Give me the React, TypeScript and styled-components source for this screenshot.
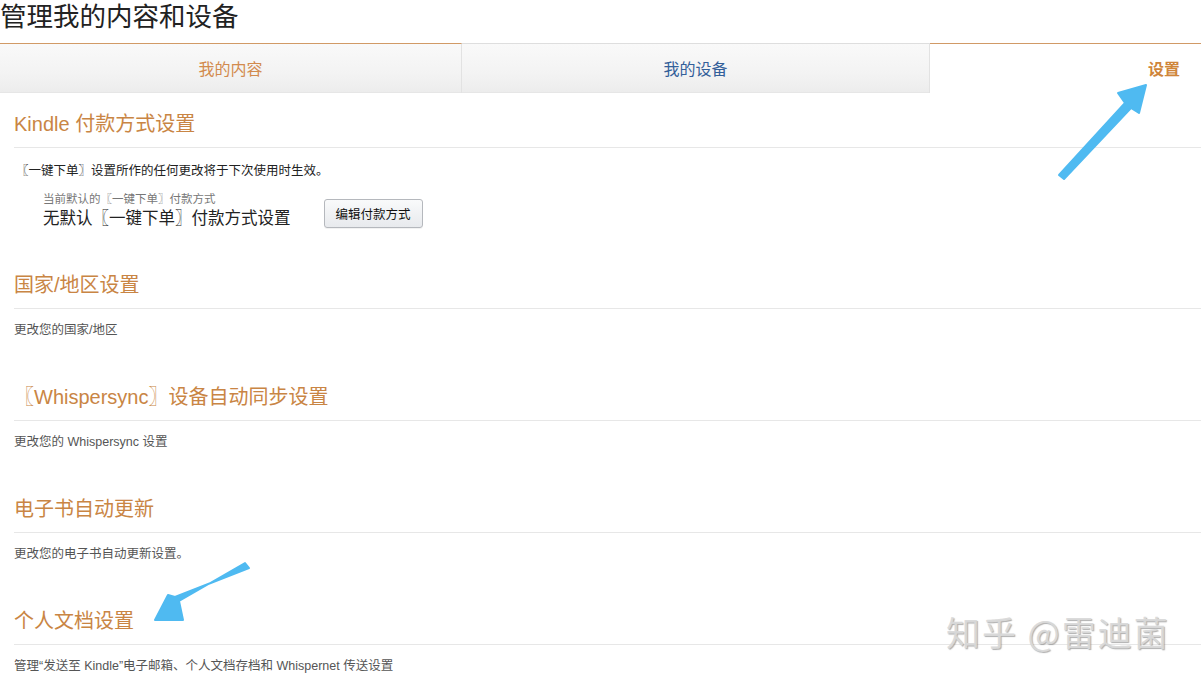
import React from 'react'
import styled, { createGlobalStyle } from 'styled-components'

const GlobalStyle = createGlobalStyle`
  html, body {
    margin: 0;
    padding: 0;
    background: #fff;
    overflow: hidden;
  }
  body {
    font-family: "Liberation Sans", "Noto Sans CJK SC", sans-serif;
    color: #333;
  }
`

const Page = styled.div`
  position: relative;
  width: 1201px;
  height: 684px;
  overflow: hidden;
`

const Title = styled.h1`
  margin: 0;
  height: 43px;
  font-size: 26.5px;
  font-weight: 400;
  line-height: 34px;
  color: #222;
`

const TabBar = styled.div`
  display: grid;
  grid-template-columns: 462px 468px 1fr;
  height: 50px;
`

const Tab = styled.div<{ $active?: boolean; $accent?: boolean }>`
  display: flex;
  align-items: center;
  justify-content: ${(p) => (p.$active ? 'flex-end' : 'center')};
  padding-right: ${(p) => (p.$active ? '21px' : '0')};
  box-sizing: border-box;
  border-top: 1px solid ${(p) => (p.$accent || p.$active ? '#d19a66' : '#dedede')};
  border-right: ${(p) => (p.$active ? 'none' : '1px solid #e2e2e2')};
  background: ${(p) =>
    p.$active ? '#fff' : 'linear-gradient(to bottom, #f9f9f9 0%, #f3f3f3 60%, #ececec 100%)'};
  box-shadow: ${(p) => (p.$active ? 'none' : 'inset 0 -1px 0 #e6e6e6')};
  font-size: 16px;
  font-weight: ${(p) => (p.$active ? 700 : 400)};
  padding-bottom: 2px;
`

const TabLabel = styled.span<{ $tone: 'orange' | 'blue' | 'strong' }>`
  color: ${(p) => (p.$tone === 'blue' ? '#33609a' : p.$tone === 'strong' ? '#cf853a' : '#d28b4e')};
`

const Content = styled.div`
  padding: 17px 0 0 14px;
`

const Section = styled.section<{ $tight?: boolean }>`
  margin-bottom: ${(p) => (p.$tight ? '43px' : '44px')};
`

const Heading = styled.h2`
  margin: 0;
  padding-bottom: 9px;
  border-bottom: 1px solid #e7e7e7;
  font-size: 20px;
  font-weight: 400;
  line-height: 28px;
  color: #c98544;
`

const Body = styled.p<{ $dark?: boolean }>`
  margin: ${(p) => (p.$dark ? '14px' : '12px')} 0 0 0;
  font-size: 12.5px;
  line-height: 18px;
  color: ${(p) => (p.$dark ? '#222' : '#555')};
  padding-left: ${(p) => (p.$dark ? '2px' : '0')};
`

const DefaultRow = styled.div`
  display: flex;
  align-items: flex-end;
  gap: 33px;
  margin: 12px 0 0 29px;
`

const DefaultInfo = styled.div`
  display: flex;
  flex-direction: column;
`

const SmallLabel = styled.span`
  font-size: 11.5px;
  line-height: 14px;
  color: #777;
`

const DefaultValue = styled.span`
  font-size: 16.5px;
  line-height: 20px;
  color: #222;
  margin-top: 2px;
`

const Button = styled.button`
  height: 29px;
  width: 99px;
  border: 1px solid #b5b8bd;
  border-radius: 3px;
  background: linear-gradient(to bottom, #f9fafb, #e8eaed);
  font-family: "Liberation Sans", "Noto Sans CJK SC", sans-serif;
  font-size: 12.5px;
  color: #111;
  box-shadow: 0 1px 0 rgba(0, 0, 0, 0.05);
  cursor: pointer;
`

const Arrow = styled.svg`
  position: absolute;
  left: 0;
  top: 0;
  pointer-events: none;
`

const Watermark = styled.div`
  position: absolute;
  left: 946px;
  top: 610px;
  font-family: "Noto Sans CJK SC", sans-serif;
  font-size: 34px;
  line-height: 44px;
  letter-spacing: 2px;
  color: rgba(218, 218, 218, 0.95);
  text-shadow: 1px 1px 1px rgba(110, 110, 110, 0.55);
  white-space: nowrap;
`

const ARROW_COLOR = '#4fbaf1'

export default function App() {
  return (
    <Page>
      <GlobalStyle />
      <Title>管理我的内容和设备</Title>
      <TabBar>
        <Tab $accent>
          <TabLabel $tone="orange">我的内容</TabLabel>
        </Tab>
        <Tab>
          <TabLabel $tone="blue">我的设备</TabLabel>
        </Tab>
        <Tab $active>
          <TabLabel $tone="strong">设置</TabLabel>
        </Tab>
      </TabBar>
      <Content>
        <Section $tight>
          <Heading>Kindle 付款方式设置</Heading>
          <Body $dark>〖一键下单〗设置所作的任何更改将于下次使用时生效。</Body>
          <DefaultRow>
            <DefaultInfo>
              <SmallLabel>当前默认的〖一键下单〗付款方式</SmallLabel>
              <DefaultValue>无默认〖一键下单〗付款方式设置</DefaultValue>
            </DefaultInfo>
            <Button>编辑付款方式</Button>
          </DefaultRow>
        </Section>
        <Section>
          <Heading>国家/地区设置</Heading>
          <Body>更改您的国家/地区</Body>
        </Section>
        <Section>
          <Heading>〖Whispersync〗设备自动同步设置</Heading>
          <Body>更改您的 Whispersync 设置</Body>
        </Section>
        <Section>
          <Heading>电子书自动更新</Heading>
          <Body>更改您的电子书自动更新设置。</Body>
        </Section>
        <Section>
          <Heading>个人文档设置</Heading>
          <Body>管理“发送至 Kindle”电子邮箱、个人文档存档和 Whispernet 传送设置</Body>
        </Section>
      </Content>
      <Watermark>知乎 @雷迪菌</Watermark>
      <Arrow width="1201" height="684" viewBox="0 0 1201 684">
        <path
          d="M1059 175 L1125 103 L1118 93 L1146 85 L1139 113 L1131 108 L1064 179 Z"
          fill={ARROW_COLOR}
          stroke={ARROW_COLOR}
          strokeWidth="2"
          strokeLinejoin="round"
        />
        <path
          d="M245 563 L179 601 L183 620 L155 620 L168 595 L175 597 L249 568 Z"
          fill={ARROW_COLOR}
          stroke={ARROW_COLOR}
          strokeWidth="2"
          strokeLinejoin="round"
        />
      </Arrow>
    </Page>
  )
}
